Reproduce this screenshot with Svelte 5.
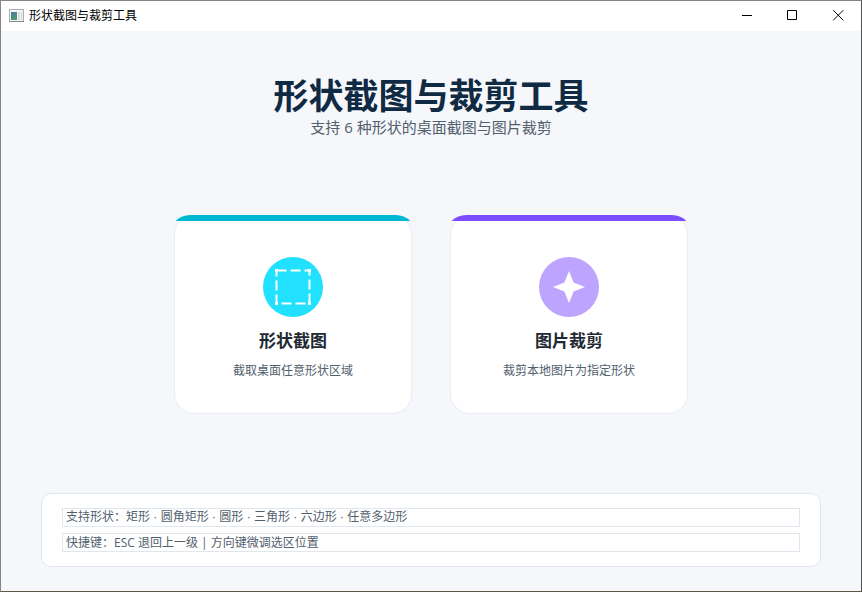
<script>
  const title = '形状截图与裁剪工具';
  const cards = [
    { kind: 'capture', name: '形状截图', text: '截取桌面任意形状区域' },
    { kind: 'crop', name: '图片裁剪', text: '裁剪本地图片为指定形状' }
  ];
</script>

<div class="window">
  <header class="titlebar">
    <svg class="app-icon" width="15" height="14" viewBox="0 0 15 14" aria-hidden="true">
      <defs>
        <linearGradient id="pane" x1="0" y1="0" x2="0.6" y2="1">
          <stop offset="0" stop-color="#4a78b0" />
          <stop offset="1" stop-color="#4a9a70" />
        </linearGradient>
      </defs>
      <rect x="0.5" y="0.5" width="14" height="12" fill="#f4f4f4" stroke="#a9adb0" />
      <rect x="0" y="12" width="15" height="1" fill="#85898c" />
      <rect x="2" y="3" width="6" height="8" fill="url(#pane)" />
      <rect x="9" y="3" width="2" height="8" fill="#d9dde0" />
      <rect x="12" y="3" width="1" height="8" fill="#d0d4d7" />
    </svg>
    <span class="caption">{title}</span>
    <button aria-label="最小化">
      <svg width="10" height="11" viewBox="0 0 10 11"><path d="M1 5.5H11" /></svg>
    </button>
    <button aria-label="最大化">
      <svg width="10" height="11" viewBox="0 0 10 11"><path d="M.5 .5H9.5V9.5H.5Z" /></svg>
    </button>
    <button aria-label="关闭">
      <svg width="10" height="11" viewBox="0 0 10 11"><path d="M.2 .2L10.3 10.3M10.3 .2L.2 10.3" /></svg>
    </button>
  </header>

  <main>
    <h1>{title}</h1>
    <p class="subtitle">支持 6 种形状的桌面截图与图片裁剪</p>

    <div class="cards">
      {#each cards as card}
        <button class="card {card.kind}">
          <span class="accent"></span>
          <svg class="badge" width="60" height="60" viewBox="0 0 60 60" aria-hidden="true">
            <circle cx="30" cy="30" r="30" />
            {#if card.kind === 'capture'}
              <path
                d="M13.5 13.5H46.5V46.5H13.5Z"
                fill="none"
                stroke="#fff"
                stroke-width="2"
                stroke-dasharray="10 4"
              />
              <path d="M12 12h3v3h-3zM45 12h3v3h-3zM12 45h3v3h-3zM45 45h3v3h-3z" fill="#fff" />
            {:else}
              <path d="M30 14L34.6 25.4L46 30L34.6 34.6L30 46L25.4 34.6L14 30L25.4 25.4Z" fill="#fff" />
            {/if}
          </svg>
          <span class="name">{card.name}</span>
          <span class="text">{card.text}</span>
        </button>
      {/each}
    </div>

    <section class="hints">
      <p class="shapes">支持形状：矩形 · 圆角矩形 · 圆形 · 三角形 · 六边形 · 任意多边形</p>
      <p>快捷键：ESC 退回上一级 | 方向键微调选区位置</p>
    </section>
  </main>
</div>

<style>
  :global(body) {
    margin: 0;
  }
  .window {
    box-sizing: border-box;
    min-height: 100vh;
    display: flex;
    flex-direction: column;
    border: 1px solid #858585;
    border-right-color: #505050;
    border-bottom-color: #5e5448;
    background: #f5f7fb;
    font-family: 'Open Sans', 'Noto Sans CJK SC', sans-serif;
  }
  button {
    border: 0;
    padding: 0;
    font-family: inherit;
  }
  .titlebar {
    display: flex;
    align-items: center;
    height: 30px;
    padding-left: 8px;
    background: #fff;
  }
  .caption {
    flex: 1;
    margin-left: 5px;
    font-size: 12px;
    line-height: 16px;
    color: #000;
  }
  .titlebar button {
    box-sizing: border-box;
    display: flex;
    align-items: flex-start;
    justify-content: center;
    width: 46px;
    height: 30px;
    padding-top: 9px;
    background: none;
  }
  .titlebar button svg {
    overflow: visible;
  }
  .titlebar button path {
    fill: none;
    stroke: #000;
  }
  main {
    flex: 1;
    display: flex;
    flex-direction: column;
    align-items: center;
    padding: 42px 40px 24px;
  }
  h1 {
    margin: 0;
    font-size: 35px;
    line-height: 46px;
    font-weight: 700;
    color: #102a43;
  }
  .subtitle {
    margin: 0;
    font-size: 15px;
    line-height: 16px;
    color: #52606d;
  }
  .cards {
    flex: 1;
    display: flex;
    align-items: center;
    gap: 38px;
  }
  .card {
    position: relative;
    box-sizing: border-box;
    width: 238px;
    height: 199px;
    display: flex;
    flex-direction: column;
    align-items: center;
    padding-top: 41px;
    border: 1px solid #eaedf3;
    border-radius: 20px;
    background: #fff;
  }
  .accent {
    position: absolute;
    top: -1px;
    left: 0;
    right: 0;
    height: 6px;
    overflow: hidden;
  }
  .accent::before {
    content: '';
    position: absolute;
    top: 0;
    left: -5px;
    right: -5px;
    height: 40px;
    border-radius: 20px;
  }
  .capture .accent::before {
    background: #00b8d4;
  }
  .crop .accent::before {
    background: #7c4dff;
  }
  .capture circle {
    fill: #22e1ff;
  }
  .crop circle {
    fill: #bda5ff;
  }
  .name {
    margin-top: 12px;
    font-size: 17px;
    line-height: 24px;
    font-weight: 700;
    color: #1f2933;
  }
  .text {
    margin-top: 9px;
    font-size: 12px;
    line-height: 18px;
    color: #52606d;
  }
  .hints {
    box-sizing: border-box;
    width: 100%;
    display: flex;
    flex-direction: column;
    gap: 6px;
    padding: 14px 20px;
    border: 1px solid #e0e6ee;
    border-radius: 10px;
    background: #fff;
  }
  .hints p {
    margin: 0;
    padding: 0 3px;
    border: 1px solid #e0e6ee;
    font-size: 12px;
    line-height: 17px;
    color: #52606d;
  }
  .hints .shapes {
    font-family: 'Liberation Sans', 'Noto Sans CJK SC', sans-serif;
  }
</style>
